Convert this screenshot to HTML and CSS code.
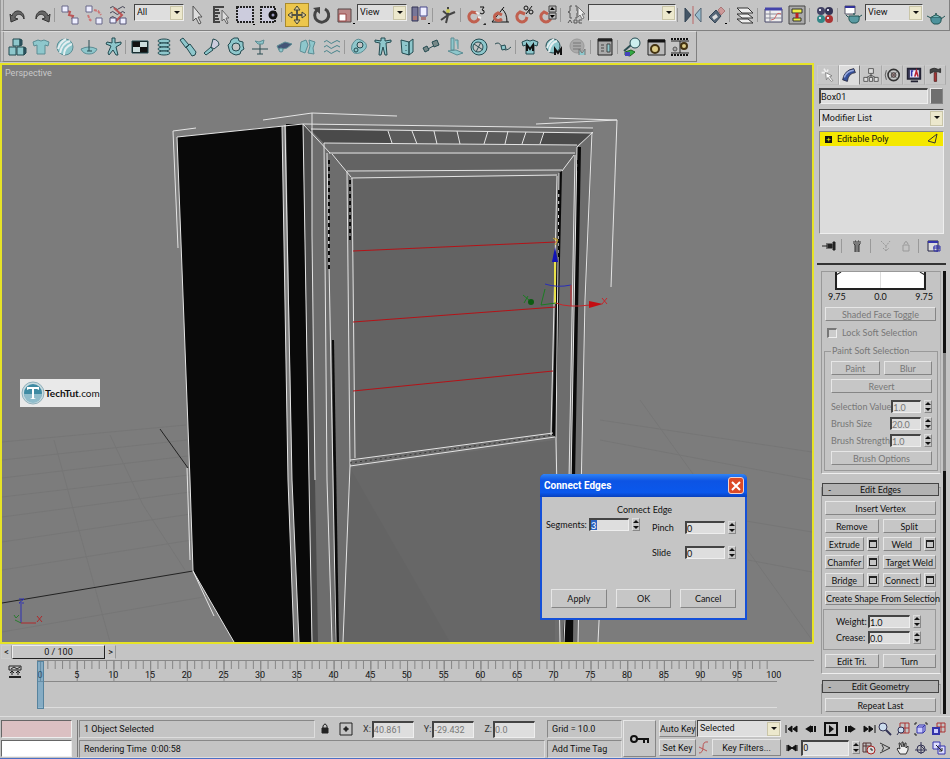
FILE: index.html
```html
<!DOCTYPE html>
<html lang="en">
  <head>
    <meta charset="UTF-8" />
    <title>Perspective - Connect Edges</title>
    <link rel="stylesheet" href="styles.css" />
  </head>
  <body>
    <header>
      <div class="toolbar main-bar">
        <button class="tool" title="Undo"><svg viewBox="0 0 20 20"><path d="M2 9l1 8 7-3-3-1c0-4 7-6 9 1 1-9-10-11-12-3z" fill="#666" stroke="#333"/></svg></button>
        <button class="tool" title="Redo"><svg viewBox="0 0 20 20"><path d="M18 9l-1 8-7-3 3-1c0-4-7-6-9 1-1-9 10-11 12-3z" fill="#666" stroke="#333"/></svg></button>
        <span class="sep"></span>
        <button class="tool" title="Link"><svg viewBox="0 0 20 20"><path d="M7 6l3 1-1 3 4 1-1 3" stroke="#b55" stroke-width="2"/><path d="M2 1h6v6H2zM12 13h6v6h-6z" fill="#eef" stroke="#668"/></svg></button>
        <button class="tool" title="Unlink"><svg viewBox="0 0 20 20"><path d="M4 10l2 5 2 1M10 5l4 1 3 4" stroke="#c77" stroke-width="2" stroke-dasharray="3 1"/><path d="M2 1h6v6H2zM12 13h6v6h-6z" fill="#eef" stroke="#668"/></svg></button>
        <button class="tool" title="Bind to space warp"><svg viewBox="0 0 20 20"><path d="M2 3q3-3 5 0t5 0 5 0M2 8q3-3 5 0t5 0 5 0M2 13q3-3 5 0t5 0" stroke="#445"/><path d="M6 3l8 7-6 6" stroke="#b55" stroke-width="2"/><path d="M2 13h6v5H2zM12 13h6v6h-6z" fill="#eef" stroke="#557"/></svg></button>
        <span class="combo filter-combo"><select aria-label="Selection filter"><option>All</option></select></span>
        <button class="tool" title="Select"><svg viewBox="0 0 20 20"><path d="M6 1v15l3-3 3 6 2-1-3-6h4z" fill="#ddd" stroke="#555"/></svg></button>
        <button class="tool" title="Select by name"><svg viewBox="0 0 20 20"><path d="M2 2h11M2 5h6M2 8h7M2 11h5M2 14h6M2 17h7M3 2v15" stroke="#444" stroke-width="2"/><path d="M11 5v11l2-2 3 5 1-1-2-5h3z" fill="#ddd" stroke="#666"/></svg></button>
        <button class="tool" title="Rectangular region"><svg viewBox="0 0 20 20"><path d="M2 2h16v15H2z" fill="#ccd" stroke="#222" stroke-width="2" stroke-dasharray="2 1"/><path d="M18 19h2v1h-2z" fill="#000"/></svg></button>
        <button class="tool" title="Window crossing"><svg viewBox="0 0 20 20"><path d="M2 2h14v15H2z" fill="#ccd" stroke="#222" stroke-width="2" stroke-dasharray="2 1"/><circle cx="14" cy="10" r="3" fill="#99b" stroke="#111" stroke-width="3"/></svg></button>
        <span class="sep"></span>
        <button class="tool active" title="Move"><svg viewBox="0 0 20 20"><path d="M10 2v16M2 10h16" stroke="#554" stroke-width="2"/><path d="M7 5l3-4 3 4zM7 15l3 4 3-4zM5 7l-4 3 4 3zM15 7l4 3-4 3z" fill="#dc9" stroke="#443"/></svg></button>
        <button class="tool" title="Rotate"><svg viewBox="0 0 20 20"><path d="M14 4a7 7 0 1 1-8 1" stroke="#444" stroke-width="3"/><path d="M2 3l7-1v7z" fill="#444"/></svg></button>
        <button class="tool" title="Scale"><svg viewBox="0 0 20 20"><path d="M3 4h13v13H3z" fill="#b88" stroke="#544"/><path d="M4 9h7v7H4z" fill="#fff" stroke="#944"/><path d="M18 18h2v1h-2z" fill="#000"/></svg></button>
        <span class="combo view-combo"><select aria-label="Reference coordinate system"><option>View</option></select></span>
        <button class="tool" title="Pivot center"><svg viewBox="0 0 20 20"><path d="M2 2h6v14H2z" fill="#779" stroke="#335"/><path d="M10 2h7v9h-7z" fill="#eef" stroke="#448"/><path d="M3 11h4v4H3zM11 12h5v3h-5z" fill="#a77"/><path d="M18 18h2v1h-2z" fill="#000"/></svg></button>
        <span class="sep"></span>
        <button class="tool" title="Manipulate"><svg viewBox="0 0 20 20"><path d="M10 2v8l-7 5M10 10l7-3M5 6l5 4M8 18l2-8" stroke="#444" stroke-width="2"/><circle cx="10" cy="6" r="2" fill="#cc5"/></svg></button>
        <span class="sep"></span>
        <button class="tool" title="Snaps toggle"><svg viewBox="0 0 20 20"><path d="M11 8L6 7q-5 3-2 8 4 4 8 0l1-3" stroke="#c0604f" stroke-width="3"/><path d="M10 7l3 2M12 12l3 1" stroke="#eee" stroke-width="2"/><path d="M14 2h4l-2 3q3 0 2 3-2 2-4 0M18 19h2v1h-2z" stroke="#111"/></svg></button>
        <button class="tool" title="Angle snap"><svg viewBox="0 0 20 20"><path d="M2 17h17M2 17L14 2M12 4q5 4 5 13" stroke="#111"/><path d="M12 10L8 8q-5 2-3 6 3 3 7 0" stroke="#c0604f" stroke-width="3"/></svg></button>
        <button class="tool" title="Percent snap"><svg viewBox="0 0 20 20"><path d="M11 9L6 7q-5 3-2 8 4 4 8 0l1-3" stroke="#c0604f" stroke-width="3"/><path d="M18 1l-6 8" stroke="#111"/><circle cx="12" cy="3" r="2" stroke="#111"/><circle cx="17" cy="7" r="2" stroke="#111"/></svg></button>
        <button class="tool" title="Spinner snap"><svg viewBox="0 0 20 20"><path d="M10 9L6 7q-5 3-2 8 4 4 8 0l1-3" stroke="#c0604f" stroke-width="3"/><path d="M11 1h7v6h-7zM11 8h7v6h-7z" fill="#bbb" stroke="#444"/><path d="M12 5l2-3 3 3zM12 10h5l-3 3z" fill="#000"/></svg></button>
        <span class="sep"></span>
        <button class="tool" title="Named selection sets"><svg viewBox="0 0 20 20"><path d="M6 1H4v5L2 7l2 1v5h2M9 1h2v5l2 1-2 1v5H9M2 18l2-3 2 3M8 15v3h3v-3zM16 15h-3v3h3" stroke="#555"/><path d="M12 2v10l2-2 2 4 2-1-2-4h3z" fill="#eee" stroke="#777"/></svg></button>
        <span class="combo sets-combo"><select aria-label="Named selection set"><option></option></select></span>
        <span class="sep"></span>
        <button class="tool" title="Mirror"><svg viewBox="0 0 20 20"><path d="M2 3l6 7-6 7z" fill="#456" stroke="#345"/><path d="M18 3l-6 7 6 7z" fill="#9bc" stroke="#567"/><path d="M10 1v18" stroke="#b66"/></svg></button>
        <button class="tool" title="Align"><svg viewBox="0 0 20 20"><path d="M2 12l7-7 5 6-6 7z" fill="#567" stroke="#345"/><path d="M11 5l3-3 4 4-4 4z" fill="#c99" stroke="#a77"/><path d="M5 12l4-3 2 3-4 3z" fill="#ddd"/><path d="M18 18h2v1h-2z" fill="#000"/></svg></button>
        <span class="sep"></span>
        <button class="tool" title="Layer manager"><svg viewBox="0 0 20 20"><path d="M2 14h11l5 4H7zM2 9h11l5 4H7zM2 3h11l5 5H7z" fill="#eee" stroke="#333"/></svg></button>
        <span class="sep"></span>
        <button class="tool" title="Curve editor"><svg viewBox="0 0 20 20"><path d="M2 4h17v13H2z" fill="#eee" stroke="#446"/><path d="M2 4h17" stroke="#44a" stroke-width="3"/><path d="M7 5v12M2 9h17M2 13h17" stroke="#889"/><path d="M8 15q4 0 5-4t5-2" stroke="#c66"/></svg></button>
        <button class="tool" title="Schematic view"><svg viewBox="0 0 20 20"><path d="M2 1h16v18H2z" fill="#aaa" stroke="#444"/><path d="M5 4h10v4H5zM6 13h8v3H6z" fill="#ee4" stroke="#333"/><path d="M10 8v5" stroke="#b22" stroke-width="3"/></svg></button>
        <span class="sep"></span>
        <button class="tool" title="Material editor"><svg viewBox="0 0 20 20"><circle cx="6" cy="6" r="4" fill="#446"/><circle cx="14" cy="6" r="4" fill="#335"/><circle cx="6" cy="14" r="4" fill="#388"/><circle cx="14" cy="14" r="4" fill="#a33"/><path d="M4 5h2M12 5h2M4 13h2M12 13h2" stroke="#dde" stroke-width="2"/></svg></button>
        <span class="sep"></span>
        <button class="tool" title="Render scene"><svg viewBox="0 0 20 20"><path d="M2 1h10v8H2z" fill="#fff" stroke="#556"/><path d="M2 2h10" stroke="#339" stroke-width="2"/><path d="M5 12l-2-2M6 11h10q1 6-3 7H9q-4-2-3-7zM16 12l3-2" fill="#5a9aa2" stroke="#255"/><circle cx="11" cy="9" r="1" fill="#366"/></svg></button>
        <span class="combo render-combo"><select aria-label="Render type"><option>View</option></select></span>
        <button class="tool" title="Quick render"><svg viewBox="0 0 20 20"><path d="M5 13L1 11M5 12h10q1 6-3 7H8q-4-2-3-7zM15 14l4-3" fill="#4d929c" stroke="#255"/><path d="M6 12q4-4 8 0" fill="#7bb" stroke="#255"/><circle cx="10" cy="9" r="1" fill="#255"/></svg></button>
      </div>

      <div class="toolbar reactor-bar">
        <button class="tool" title="Rigid bodies"><svg viewBox="0 0 20 20"><path d="M6 2h7v7H6zM2 10h7v8H2zM10 10h7v8h-7z"/><path d="M13 2l2 1v5l-2 1zM17 10l2 1v5l-2 2z" fill="#356"/></svg></button>
        <button class="tool" title="Cloth"><svg viewBox="0 0 20 20"><path class="soft" d="M2 5l5-2q3 2 6 0l5 2-1 4-3-1v9H6V8L3 9z"/></svg></button>
        <button class="tool" title="Soft body"><svg viewBox="0 0 20 20"><circle class="soft" cx="10" cy="10" r="8"/><path d="M5 16Q7 6 15 4M3 12Q5 5 11 2M9 18q0-8 8-11" stroke="#e4eef0" stroke-width="2" fill="none"/></svg></button>
        <button class="tool" title="Rope"><svg viewBox="0 0 20 20"><path class="soft" d="M2 12q8-4 16 0-2 5-8 5t-8-5z"/><path class="line" d="M10 3v11M8 14h5"/></svg></button>
        <button class="tool" title="Deforming mesh"><svg viewBox="0 0 20 20"><path d="M9 1h3v5l6-1v2l-5 3 2 8h-2l-3-5-4 5-1-2 3-7-5-2 1-2 5 1z"/></svg></button>
        <span class="sep"></span>
        <button class="tool" title="Plane"><svg viewBox="0 0 20 20"><path d="M2 4h16v12H2z" fill="#111"/><path d="M10 5h7v5h-7zM3 10h7v5H3z" fill="#cdd" stroke="none"/></svg></button>
        <button class="tool" title="Spring"><svg viewBox="0 0 20 20"><ellipse cx="10" cy="4" rx="6" ry="2"/><ellipse cx="10" cy="8" rx="6" ry="2"/><ellipse cx="10" cy="12" rx="6" ry="2"/><ellipse cx="10" cy="16" rx="6" ry="2"/></svg></button>
        <button class="tool" title="Linear dashpot"><svg viewBox="0 0 20 20"><path d="M2 3l3-2 6 7-3 3zM8 10l4-3 6 8-1 3-3 1z"/></svg></button>
        <button class="tool" title="Angular dashpot"><svg viewBox="0 0 20 20"><path d="M2 16l7-6 2 3-7 5z"/><path d="M9 10l2-8q6 1 6 6l-5 4z" fill="#ccd"/></svg></button>
        <button class="tool" title="Motor"><svg viewBox="0 0 20 20"><path d="M8 1h4l1 3 4 1v4l1 3-3 2-1 3-4 1-3-1-3-2-1-3-1-4 2-2 1-3z"/><circle cx="10" cy="10" r="4" fill="#c4c4c4"/></svg></button>
        <button class="tool" title="Wind"><svg viewBox="0 0 20 20"><path class="line" d="M2 12h16M10 5v12M7 17h6"/><path class="soft" d="M5 4l4 1 5-2-1 4H8z"/></svg></button>
        <button class="tool" title="Toy car"><svg viewBox="0 0 20 20"><path class="soft" d="M3 9l8-4 7 2-5 4-8 2z" fill="#457"/><circle class="soft" cx="7" cy="13" r="2"/></svg></button>
        <button class="tool" title="Fracture"><svg viewBox="0 0 20 20"><path class="soft" d="M3 5l5-2 2 5-3 8-5-2zM11 3l6 2-2 6 1 6-6-1 2-7z"/></svg></button>
        <button class="tool" title="Water"><svg viewBox="0 0 20 20"><path class="wave" d="M2 5q3-3 5 0t5 0 6 0M2 10q3-3 5 0t5 0 6 0M2 15q3-3 5 0t5 0 6 0"/></svg></button>
        <span class="sep"></span>
        <button class="tool" title="Constraint solver"><svg viewBox="0 0 20 20"><path class="soft" d="M3 8q4-8 9-5 7 3 5 8-5 7-12 5-4-3-2-8z"/><circle cx="11" cy="8" r="3" fill="#c4c4c4"/><circle cx="7" cy="13" r="2"/></svg></button>
        <button class="tool" title="Rag doll"><svg viewBox="0 0 20 20"><path d="M8 1h4v3l6-1v2l-5 1 1 12h-2l-2-8-2 8H6l1-12-5-1V3l6 1z"/></svg></button>
        <button class="tool" title="Hinge"><svg viewBox="0 0 20 20"><path d="M4 3l8 2v13l-7-2zM12 5l4-3v13l-4 3z"/><path class="line" d="M9 8v1M9 13v1"/></svg></button>
        <button class="tool" title="Point to point"><svg viewBox="0 0 20 20"><path class="line" d="M7 12l7-4"/><path d="M2 11l4-2 2 4-4 2zM11 5l5-2 2 5-5 2z" fill="#788"/></svg></button>
        <button class="tool" title="Prismatic"><svg viewBox="0 0 20 20"><path class="soft" d="M6 1h3v12H6zM3 14l8-1 7 3-6 2zM10 3h3v9"/></svg></button>
        <button class="tool" title="Wheel"><svg viewBox="0 0 20 20"><circle cx="10" cy="10" r="8"/><circle cx="9" cy="10" r="5" fill="#c4c4c4"/><path class="line" d="M5 7l9 6M12 5L7 15"/></svg></button>
        <button class="tool" title="Point to path"><svg viewBox="0 0 20 20"><path class="line" d="M2 7q4-3 7 3t9 0"/><path d="M8 9l4-1 1 4-4 1z"/></svg></button>
        <span class="sep"></span>
        <button class="tool" title="Cloth modifier"><svg viewBox="0 0 20 20"><path d="M2 5l5-2q3 2 6 0l5 2-1 4-3-1v9H6V8L3 9z"/><path class="mark" d="M7 14V8l3 4 3-4v6"/></svg></button>
        <button class="tool" title="Soft body modifier"><svg viewBox="0 0 20 20"><circle cx="9" cy="9" r="7"/><path d="M5 15Q6 6 13 4M3 11q2-6 7-9" stroke="#e4eef0" stroke-width="2" fill="none"/><path class="mark" d="M11 18v-6l3 4 3-4v6"/></svg></button>
        <button class="tool" title="Rope modifier"><svg viewBox="0 0 20 20"><circle cx="9" cy="9" r="7" fill="#aaa" stroke="#999"/><path d="M5 6h8M5 9h8M5 12h8M11 18v-6l3 4 3-4v6" stroke="#777"/></svg></button>
        <span class="sep"></span>
        <button class="tool" title="Property editor"><svg viewBox="0 0 20 20"><path d="M3 2h14v16H3z" fill="#aaa" stroke="#222"/><path d="M3 3h14" stroke="#222" stroke-width="3"/><path d="M6 8h3M6 11h3M6 14h3M12 7h3v8h-3z" stroke="#444"/></svg></button>
        <span class="sep"></span>
        <button class="tool" title="Analyze world"><svg viewBox="0 0 20 20"><path d="M3 15l6-2 4 2-5 4-5-1z" fill="#3a4" stroke="#262"/><path d="M3 15h5v4H3z" fill="#44b" stroke="none"/><path class="line" d="M2 14l7-6" stroke-width="2"/><circle cx="13" cy="6" r="5" fill="#cee"/></svg></button>
        <button class="tool" title="Preview animation"><svg viewBox="0 0 20 20"><path d="M2 3h17v15H2z" fill="#bbb" stroke="#222"/><path d="M2 4h17" stroke="#111" stroke-width="3"/><circle cx="9" cy="12" r="4" fill="#dc8" stroke="#431" stroke-width="2"/></svg></button>
        <button class="tool" title="Create animation"><svg viewBox="0 0 20 20"><path d="M1 2h18M1 18h18" stroke="#111" stroke-width="2" stroke-dasharray="2 1"/><path d="M1 4h18M1 16h18M10 4v12" stroke="#222"/><circle cx="14" cy="9" r="3" fill="#dc8" stroke="#431" stroke-width="2"/><circle cx="5" cy="12" r="2" fill="#aaa" stroke="#555"/></svg></button>
      </div>
    </header>

    <main>
      <section class="stage">
        <div class="viewport">
          <svg class="scene" viewBox="2 65 810 577" preserveAspectRatio="xMinYMin slice">
            <!-- ground grid -->
            <g stroke="#767676">
              <path d="M2 442L186 425M2 460L187 440M2 478L188 456M2 497L189 475M2 517L190 492M2 542L191 514M2 570L192 540M2 632L215 595M54 440L72 505 110 642M110 435L143 505 185 570"/>
              <path d="M600 420L812 452M600 440L812 480M740 520L812 532M748 560L812 572M640 400L812 640"/>
            </g>
            <path d="M2 603L193 571M160 429L188 468" stroke="#222"/>

            <!-- cabinet faces -->
            <path d="M303 124L593 128 586 300 578 642H312L309 480z" fill="#6d6d6d"/>
            <path d="M177 137L282 126 288 480 294 642H234L193 571 190 480z" fill="#090909"/>
            <path d="M286 124L303 124 309 480 312 642H299L292 480z" fill="#090909"/>
            <path d="M303 124L311 130 315 480 318 642H312L309 480z" fill="#4c4c4c"/>
            <path d="M311 130L593 133 577 145 324 143z" fill="#5b5b5b"/>
            <path d="M311 130L388 131 392 143H324zM543 133L593 133 577 145 540 144z" fill="#4a4a4a"/>
            <path d="M330 154L575 154 562 170 347 171z" fill="#636363"/>
            <path d="M352 178L557 176 552 434 355 460z" fill="#636363"/>
            <path d="M350 468L555 440V642H343z" fill="#676767"/>
            <path d="M350 468L450 642H343z" fill="#646464"/>
            <path d="M577 147L581 147 575 480 573 642H563L571 480zM559 173L562 171 556 437 552 435z" fill="#0a0a0a"/>
            <path d="M332 340L334 340 339 642H335z" fill="#0a0a0a"/>

            <!-- edges -->
            <g stroke="#e4e4e4">
              <path d="M177 137L190 480 193 571 234 642M193 571L214 616M187 468L190 560M177 137L303 124M282 126L288 480 294 642M285 125L292 480 299 642"/>
              <path d="M303 124L593 128M311 129L593 133M324 143L577 145M329 153L575 153M347 171L562 170M351 178L557 175"/>
              <path d="M303 124L330 153M332 154L351 177M593 132L577 147M574 155L562 171"/>
              <path d="M388 131L392 143M412 131L417 144M434 131L437 144M457 131L460 144M488 131L484 144M508 131L505 144M526 132L522 144M544 132L540 144"/>
              <path d="M303 124L309 480 312 642M324 143L327 480 332 642M327 153L333 480 336 642M347 172L350 466 343 642M352 178L355 458"/>
              <path d="M312 113V235L315 480M557 176L551 435M559 173L556 440 560 642M575 155L569 480M592 132L585 300 578 642M577 147L571 480 564 642"/>
              <path d="M350 460L553 433M350 466L555 437M173 131L196 128M173 131L178 248M263 120L312 113 397 116M549 118L617 120 611 287M536 124L617 120M606 480L598 642"/>
            </g>
            <path d="M350 463L554 435" stroke="#333" stroke-dasharray="2 3"/>
            <path d="M329 160V270M350 180V240M559 190V260M578 160V220" stroke="#090909" stroke-width="2" stroke-dasharray="4 3"/>
            <path d="M353 251L556 242M353 322L556 307M353 391L553 371" stroke="#b51217"/>

            <!-- move gizmo -->
            <path d="M555 304V262" stroke="#e8e04a" stroke-width="2"/>
            <path d="M555 247L552 262H558z" fill="#1113b5"/>
            <path d="M555 238l3 2-3 5M553 238l4 3" stroke="#cfa92c"/>
            <path d="M545 284q12 4 26 1" stroke="#2a2db8"/>
            <path d="M571 285V306M556 303q12 5 34 2" stroke="#c7252a"/>
            <path d="M589 301L603 304 589 308z" fill="#c30d12"/>
            <path d="M602 298l5 6M607 298l-5 6" stroke="#c7252a"/>
            <path d="M556 303l-15 2 4-16M523 295l6 5M528 296l-4 7" stroke="#1c7c22"/>
            <circle cx="531" cy="302" r="3" fill="#0c5c11"/>

            <!-- world axis -->
            <path d="M21 623V604M19 599h5l-5 4h5" stroke="#2f31b4"/>
            <path d="M21 623h15M37 616l5 6M42 616l-5 6" stroke="#b0282a"/>
            <path d="M21 623l-6-3M14 615l2 3 3-3" stroke="#2b7d2f"/>
          </svg>
          <span class="view-name">Perspective</span>
          <div class="watermark">
            <svg viewBox="0 0 24 24"><circle cx="12" cy="12" r="11" fill="#c9dbe0" stroke="#8fb0ba"/><circle cx="12" cy="12" r="9" fill="#3f8ba3"/><path d="M3 13a9 9 0 0 0 18 0z" fill="#8fbccb"/><path d="M6 6h12v3l-2-1h-3v9l2 1H9l2-1V8H8L6 9z" fill="#fff"/></svg>
            <span><b>TechTut</b>.com</span>
          </div>

          <form class="dialog">
            <div class="dialog-title">
              <h2>Connect Edges</h2>
              <button type="button" class="close" aria-label="Close"><svg viewBox="0 0 14 14"><path d="M3 3l8 8M11 3l-8 8" stroke="#fff" stroke-width="2"/></svg></button>
            </div>
            <div class="dialog-body">
              <p>Connect Edge</p>
              <div class="dialog-fields">
                <div class="field"><label for="segments">Segments:</label><input id="segments" class="picked" value="3" /><span class="spin"></span></div>
                <div class="pair">
                  <div class="field"><label for="pinch">Pinch</label><input id="pinch" value="0" /><span class="spin"></span></div>
                  <div class="field"><label for="slide">Slide</label><input id="slide" value="0" /><span class="spin"></span></div>
                </div>
              </div>
              <div class="dialog-buttons">
                <button type="button">Apply</button>
                <button type="button">OK</button>
                <button type="button">Cancel</button>
              </div>
            </div>
          </form>
        </div>

        <div class="time-slider">
          <button class="arrow" aria-label="Previous frame">&lt;</button>
          <button class="thumb">0 / 100</button>
          <button class="arrow" aria-label="Next frame">&gt;</button>
        </div>
        <div class="timeline">
          <button class="curve-toggle" aria-label="Open mini curve editor"><svg viewBox="0 0 14 14"><path d="M1 1h12v4H1z" stroke="#222"/><path d="M1 12h12" stroke="#222" stroke-width="2"/><path d="M3 4l3-2 3 2 3-2M4 6v4M10 6v4M2 8l2-2 2 2M8 8l2-2 2 2" stroke="#222"/></svg></button>
          <div class="track">
            <div class="ruler">
              <svg class="ticks"><line x1="0" y1="4" x2="100%" y2="4" pathLength="1000" stroke-width="8" stroke-dasharray="1.4 8.6"/><line x1="0" y1="10" x2="100%" y2="10" pathLength="1000" stroke-width="20" stroke-dasharray="1.4 48.6"/></svg>
              <ol>
                <li>0</li><li>5</li><li>10</li><li>15</li><li>20</li><li>25</li><li>30</li>
                <li>35</li><li>40</li><li>45</li><li>50</li><li>55</li><li>60</li><li>65</li>
                <li>70</li><li>75</li><li>80</li><li>85</li><li>90</li><li>95</li><li>100</li>
              </ol>
              <span class="now"></span>
            </div>
            <div class="keys"></div>
          </div>
        </div>
      </section>

      <aside class="panel">
        <nav class="tabs">
          <button title="Create"><svg viewBox="0 0 20 20"><path d="M5 2l3 5M2 7h4M10 3l-1 3" stroke="#eee" stroke-width="2"/><path d="M7 7l8 4-3 1 4 5-2 1-4-5-2 3z" fill="#fff" stroke="#777"/></svg></button>
          <button title="Modify" class="active"><svg viewBox="0 0 20 20"><path d="M2 16q2-12 14-14l2 5q-9 1-10 11z" fill="#35509a" stroke="#223"/><path d="M4 13q3-8 12-9" stroke="#9ad" stroke-width="2"/></svg></button>
          <button title="Hierarchy"><svg viewBox="0 0 20 20"><path d="M10 7v4M10 10l-7 4M10 10l7 4M10 10v4" stroke="#444"/><path d="M7 2h6v6H7zM1 13h5v5H1zM8 13h4v5H8zM14 13h5v5h-5z" fill="#ddd" stroke="#444"/></svg></button>
          <button title="Motion"><svg viewBox="0 0 20 20"><circle cx="12" cy="10" r="7" stroke="#333" stroke-width="2"/><circle cx="12" cy="10" r="3" fill="#a88" stroke="#333"/><path d="M8 6l8 8M16 6l-8 8M3 4q-3 6 0 12" stroke="#444"/></svg></button>
          <button title="Display"><svg viewBox="0 0 20 20"><path d="M2 2h16v13H2zM6 18h9" fill="#446" stroke="#223" stroke-width="2"/><path d="M5 4h11v9H5z" fill="#eef"/><path d="M7 12V5h2" stroke="#33a" stroke-width="2"/><path d="M11 12l2-7 2 7" stroke="#b23" stroke-width="2"/></svg></button>
          <button title="Utilities"><svg viewBox="0 0 20 20"><path d="M4 3q5-3 10 0l3-1v5l-3-1H8l-4 2z" fill="#444" stroke="#222"/><path d="M9 7h3v11H9z" fill="#a33" stroke="#522"/></svg></button>
        </nav>
        <div class="name-row">
          <input aria-label="Object name" value="Box01" />
          <button class="swatch" aria-label="Object color"></button>
        </div>
        <span class="combo modifier-combo"><select aria-label="Modifier list"><option>Modifier List</option></select></span>
        <ul class="stack">
          <li><span class="plus">+</span><span>Editable Poly</span><svg viewBox="0 0 12 12"><path d="M1 8l9-7-2 9z" stroke="#333"/></svg></li>
        </ul>
        <div class="stack-tools">
          <button title="Pin stack"><svg viewBox="0 0 14 14"><path d="M0 7h5M5 4v6M6 5h4v4H6zM11 3v8h2V3z" fill="#222" stroke="#222"/></svg></button>
          <span class="sep"></span>
          <button title="Show end result"><svg viewBox="0 0 14 14"><path d="M4 2v3l1 1v7M10 2v3L9 6v7M5 2h1v11M9 2H8v11" stroke="#333"/></svg></button>
          <span class="sep"></span>
          <button title="Make unique"><svg viewBox="0 0 14 14"><path d="M2 2l5 5 4-5M7 7v5M4 9l3 3 3-3" stroke="#999" stroke-dasharray="2 1"/></svg></button>
          <button title="Remove modifier"><svg viewBox="0 0 14 14"><path d="M4 6h6v6H4zM5 5q2-5 4 0" stroke="#999"/></svg></button>
          <span class="sep"></span>
          <button title="Configure sets"><svg viewBox="0 0 14 14"><path d="M1 2h10v10H1z" fill="#ddd" stroke="#224"/><path d="M1 3h10" stroke="#33a" stroke-width="2"/><path d="M7 7h6v5H7zM10 6v7M6 9h7" stroke="#33a"/></svg></button>
        </div>

        <div class="rollouts">
          <div class="rollout-list">
            <section class="rollout soft-selection">
              <svg class="falloff" viewBox="0 0 90 19" preserveAspectRatio="none"><path d="M0 0h90v18H0z" fill="#fff"/><path d="M1 0v17h88V0" stroke="#222" stroke-width="2"/><path d="M45 0v16" stroke="#ddd"/><path d="M1 3l5-3M89 3l-5-3" stroke="#222"/></svg>
              <div class="falloff-values"><span>9.75</span><span>0.0</span><span>9.75</span></div>
              <button class="wide" disabled>Shaded Face Toggle</button>
              <label class="check"><input type="checkbox" disabled />Lock Soft Selection</label>
              <fieldset>
                <legend>Paint Soft Selection</legend>
                <div class="row"><button disabled>Paint</button><button disabled>Blur</button></div>
                <button class="wide revert" disabled>Revert</button>
                <div class="field"><label for="selval">Selection Value</label><input id="selval" value="1.0" disabled /><span class="spin"></span></div>
                <div class="field"><label for="brushsize">Brush Size</label><input id="brushsize" value="20.0" disabled /><span class="spin"></span></div>
                <div class="field"><label for="strength">Brush Strength</label><input id="strength" value="1.0" disabled /><span class="spin"></span></div>
                <button class="wide" disabled>Brush Options</button>
              </fieldset>
            </section>

            <section class="rollout">
              <button class="rollout-head"><span>-</span>Edit Edges</button>
              <button class="wide">Insert Vertex</button>
              <div class="row"><button>Remove</button><button>Split</button></div>
              <div class="row">
                <div class="split"><button>Extrude</button><button class="opt" aria-label="Extrude settings"></button></div>
                <div class="split"><button>Weld</button><button class="opt" aria-label="Weld settings"></button></div>
              </div>
              <div class="row">
                <div class="split"><button>Chamfer</button><button class="opt" aria-label="Chamfer settings"></button></div>
                <button>Target Weld</button>
              </div>
              <div class="row">
                <div class="split"><button>Bridge</button><button class="opt" aria-label="Bridge settings"></button></div>
                <div class="split"><button>Connect</button><button class="opt" aria-label="Connect settings"></button></div>
              </div>
              <button class="wide">Create Shape From Selection</button>
              <div class="weights">
                <div class="field"><label for="weight">Weight:</label><input id="weight" value="1.0" /><span class="spin"></span></div>
                <div class="field"><label for="crease">Crease:</label><input id="crease" value="0.0" /><span class="spin"></span></div>
              </div>
              <div class="row"><button>Edit Tri.</button><button>Turn</button></div>
            </section>

            <section class="rollout last">
              <button class="rollout-head"><span>-</span>Edit Geometry</button>
              <button class="wide">Repeat Last</button>
            </section>
          </div>
          <div class="scrollbar"></div>
        </div>
      </aside>
    </main>

    <footer>
      <div class="listener"><div class="macro"></div><div class="script"></div></div>
      <div class="status">
        <div class="status-line">
          <div class="readout">1 Object Selected</div>
          <div class="coords">
            <svg class="small" viewBox="0 0 14 14"><path d="M4 6h6v5H4z" fill="#222" stroke="#222"/><path d="M5 6V4q2-4 4 0v2" stroke="#222"/></svg>
            <svg class="small" viewBox="0 0 14 14"><path d="M1 1h12v12H1z" stroke="#222"/><path d="M7 4v6M4 7h6" stroke="#222"/><circle cx="7" cy="7" r="2" fill="#222"/></svg>
            <label>X:<input value="40.861" /></label>
            <label>Y:<input value="-29.432" /></label>
            <label>Z:<input value="0.0" /></label>
          </div>
        </div>
        <div class="readout">Rendering Time&nbsp; 0:00:58</div>
      </div>
      <div class="grid-info">
        <div class="readout">Grid = 10.0</div>
        <div class="readout">Add Time Tag</div>
      </div>
      <button class="set-keys" aria-label="Set keys"><svg viewBox="0 0 20 20"><circle cx="4" cy="10" r="3" stroke="#111" stroke-width="2"/><path d="M7 10h12M14 10v4M18 10v4" stroke="#111" stroke-width="2"/></svg></button>
      <div class="key-modes">
        <div class="key-row"><button>Auto Key</button><span class="combo key-combo"><select aria-label="Key set"><option>Selected</option></select></span></div>
        <div class="key-row"><button>Set Key</button><svg class="small" viewBox="0 0 14 14"><path d="M2 12q4 0 4-6t5-5M2 6l8 4" stroke="#b55"/></svg><button class="filters">Key Filters...</button></div>
      </div>
      <div class="playback">
        <div class="play-row">
          <button title="Go to start"><svg viewBox="0 0 14 14"><path d="M1 3v8M7 4L3 7l4 3zM12 4L8 7l4 3z" fill="#111" stroke="#111"/></svg></button>
          <button title="Previous frame"><svg viewBox="0 0 14 14"><path d="M6 5L3 7l3 2zM8 4v6M11 4v6" fill="#111" stroke="#111" stroke-width="2"/></svg></button>
          <button title="Play"><svg viewBox="0 0 14 14"><path d="M1 1h12v12H1z" stroke="#111" stroke-width="2"/><path d="M5 3l5 4-5 4z" fill="#111"/></svg></button>
          <button title="Next frame"><svg viewBox="0 0 14 14"><path d="M8 5l3 2-3 2zM6 4v6M3 4v6" fill="#111" stroke="#111" stroke-width="2"/></svg></button>
          <button title="Go to end"><svg viewBox="0 0 14 14"><path d="M13 3v8M7 4l4 3-4 3zM2 4l4 3-4 3z" fill="#111" stroke="#111"/></svg></button>
        </div>
        <div class="play-row">
          <button title="Key mode"><svg viewBox="0 0 14 14"><path d="M2 4v6M12 4v6M7 7L3 4v6zM7 7l4-3v6z" fill="#111" stroke="#111"/></svg></button>
          <input aria-label="Current frame" value="0" /><span class="spin"></span>
          <button title="Time configuration"><svg viewBox="0 0 14 14"><path d="M1 2h8v9H1zM1 5h8M4 2v9" stroke="#533"/><circle cx="9" cy="9" r="4" fill="#ddd" stroke="#a22"/><path d="M9 7v2h2" stroke="#222"/></svg></button>
        </div>
      </div>
      <div class="view-nav">
        <button title="Zoom"><svg viewBox="0 0 14 14"><circle cx="5" cy="5" r="4" fill="#cde" stroke="#335"/><path d="M8 8l5 5" stroke="#335" stroke-width="2"/></svg></button>
        <button title="Zoom all"><svg viewBox="0 0 14 14"><path d="M4 1h9v10H4zM4 6h9M9 1v10" stroke="#a33"/><circle cx="5" cy="8" r="3" fill="#cde" stroke="#335"/><path d="M3 10l-2 3" stroke="#335"/></svg></button>
        <button title="Zoom extents"><svg viewBox="0 0 14 14"><path d="M3 5h6v6H3zM3 5l2-2h6v6l-2 2M9 5l2-2" fill="#ccf" stroke="#33a"/><path d="M1 3V1h2M11 1h2v2M1 11v2h2" stroke="#222"/></svg></button>
        <button title="Zoom extents all"><svg viewBox="0 0 14 14"><path d="M5 1h8v9H5zM9 1v9M5 5h8" stroke="#a33"/><path d="M1 6h6v6H1z" fill="#ccf" stroke="#33a" stroke-width="2"/></svg></button>
        <button title="Field of view"><svg viewBox="0 0 14 14"><path d="M2 2l10 5-10 5M4 4q3 3 0 6" stroke="#333"/></svg></button>
        <button title="Pan"><svg viewBox="0 0 14 14"><path d="M4 13L1 8l1-1 2 1-1-6h1l2 4V1h1l1 5 1-4h1v5l2-2v4l-2 4z" fill="#eee" stroke="#333"/></svg></button>
        <button title="Arc rotate"><svg viewBox="0 0 14 14"><circle cx="7" cy="8" r="4" stroke="#335"/><path d="M7 1v12M1 9h12M7 5l3 3" stroke="#335"/></svg></button>
        <button title="Maximize viewport"><svg viewBox="0 0 14 14"><path d="M1 1h7v7H1zM6 5h7v8H6z" fill="#ddf" stroke="#33a"/><path d="M4 4l6 6M10 7v3H7" stroke="#222"/></svg></button>
      </div>
    </footer>
  </body>
</html>
```
FILE: styles.css
```css
* {
  box-sizing: border-box;
}

body {
  margin: 0;
  min-height: 100vh;
  display: flex;
  flex-direction: column;
  background-color: #c4c4c4;
  color: #111;
  font-family: Roboto, "Liberation Sans", sans-serif;
  font-size: 9px;
  line-height: 12px;
}

button,
input,
select {
  font: inherit;
  color: inherit;
  margin: 0;
  padding: 0;
  border-radius: 0;
  min-width: 0;
}

button {
  background-color: #c6c6c6;
  border: 1px solid;
  border-color: #e6e6e6 #858585 #858585 #e6e6e6;
  white-space: nowrap;
}

input {
  background-color: #dedede;
  border: 1px solid;
  border-color: #444 #eee #eee #444;
  border-width: 2px 1px 1px 2px;
}

button:disabled,
input:disabled {
  color: #777;
}

svg {
  display: block;
  fill: none;
}

/* toolbars */
.toolbar {
  display: flex;
  align-items: center;
  height: 31px;
  border-bottom: 1px solid #808080;
  border-right: 1px solid #808080;
  border-left: 4px double #999;
}

.main-bar {
  padding-left: 2px;
}

.reactor-bar {
  width: 697px;
  padding-left: 1px;
  border-top: 1px solid #ddd;
}

.tool {
  width: 24px;
  height: 24px;
  flex: none;
  border: none;
  background: none;
  display: flex;
  align-items: center;
  justify-content: center;
}

.tool svg {
  width: 20px;
  height: 20px;
}

.tool.active {
  background-color: #ecc64c;
  border: 1px solid #a98a2c;
}

.reactor-bar svg {
  fill: #8ec7cc;
  stroke: #234a50;
}

.reactor-bar .soft {
  stroke: #5c8d94;
}

.reactor-bar .line {
  fill: none;
  stroke: #2b4d52;
}

.reactor-bar .wave {
  fill: none;
  stroke: #48848c;
}

.reactor-bar .mark {
  fill: none;
  stroke: #111;
  stroke-width: 2;
}

.sep {
  width: 4px;
  height: 14px;
  flex: none;
  border-left: 1px solid #999;
}

.reactor-bar .sep {
  width: 3px;
}

/* drop-downs */
.combo {
  position: relative;
  display: block;
  height: 17px;
  flex: none;
}

.combo select {
  appearance: none;
  width: 100%;
  height: 100%;
  display: block;
  padding: 0 14px 1px 2px;
  background-color: #dedede;
  border: 1px solid;
  border-color: #444 #eee #eee #444;
}

.combo::before {
  content: "";
  position: absolute;
  top: 2px;
  right: 1px;
  bottom: 1px;
  width: 11px;
  background-color: #ece8cd;
  border: 1px solid #c9c5a8;
  pointer-events: none;
}

.combo::after {
  content: "";
  position: absolute;
  right: 4px;
  top: 7px;
  border: 3px solid transparent;
  border-top-color: #111;
  border-bottom: none;
  pointer-events: none;
}

.toolbar .combo {
  margin: 0 1px 6px 0;
}

.toolbar .filter-combo {
  width: 50px;
  margin-left: 4px;
}

.view-combo {
  width: 50px;
}

.toolbar .sets-combo {
  width: 88px;
}

.render-combo {
  width: 58px;
}

/* viewport and timeline */
main {
  flex: 1;
  display: flex;
}

.stage {
  flex: 1;
  min-width: 0;
  display: flex;
  flex-direction: column;
}

.viewport {
  flex: 1;
  position: relative;
  margin-top: 1px;
  border: 2px solid #e6e326;
  background-color: #7c7c7c;
  overflow: hidden;
}

.scene {
  position: absolute;
  width: 100%;
  height: 100%;
}

.view-name {
  position: absolute;
  left: 3px;
  top: 2px;
  color: #c8c8c8;
}

.watermark {
  position: absolute;
  left: 18px;
  top: 314px;
  width: 80px;
  height: 28px;
  display: flex;
  align-items: center;
  padding-left: 1px;
  background-color: #e9e9e9;
  font-family: Lato, sans-serif;
  font-size: 10px;
}

.watermark svg {
  width: 24px;
  height: 24px;
}

.time-slider {
  display: flex;
  height: 16px;
  padding: 1px 0 1px 1px;
}

.time-slider .arrow {
  width: 11px;
  border-color: #ccc #999 #ccc #ccc;
}

.time-slider .thumb {
  width: 93px;
  border-color: #eee #222 #222 #eee;
}

.timeline {
  display: flex;
  height: 56px;
}

.curve-toggle {
  width: 37px;
  height: 24px;
  border: none;
  background: none;
}

.curve-toggle svg {
  width: 14px;
  height: 14px;
  margin-left: 8px;
}

.track {
  flex: 1;
  border-top: 1px solid #888;
}

.ruler {
  position: relative;
  height: 20px;
  margin: 0 40px 0 3px;
}

.ticks {
  width: 100%;
  height: 20px;
  stroke: #888;
}

.ruler ol {
  position: absolute;
  top: 8px;
  left: 0;
  right: 0;
  margin: 0;
  padding: 0;
  list-style: none;
  display: flex;
  justify-content: space-between;
}

.ruler li {
  width: 0;
  display: flex;
  justify-content: center;
}

.now {
  position: absolute;
  left: -3px;
  top: 0;
  width: 7px;
  height: 48px;
  background-color: rgba(72, 148, 196, 0.5);
  border: 1px solid #56839e;
}

.keys {
  height: 27px;
  margin-right: 37px;
  border-top: 1px solid #888;
  border-bottom: 1px solid #ddd;
}

/* Connect Edges */
.dialog {
  position: absolute;
  left: 538px;
  top: 409px;
  width: 207px;
  height: 146px;
  display: flex;
  flex-direction: column;
  background-color: #c5c5c5;
  border: 2px solid #1550d8;
  border-top: none;
  border-radius: 5px 5px 0 0;
}

.dialog-title {
  display: flex;
  align-items: center;
  justify-content: space-between;
  height: 23px;
  margin: 0 -2px;
  padding: 0 3px 0 4px;
  border-radius: 5px 5px 0 0;
  background: linear-gradient(#2f83f5, #0d54e4 30%, #0a58ec 80%, #0840bd);
}

.dialog-title h2 {
  margin: 0;
  color: #fff;
  font-size: 10px;
}

.close {
  width: 16px;
  height: 17px;
  background-color: #dc4a27;
  border: 1px solid #f3d3cb;
  border-radius: 3px;
}

/* tight captions need the narrower face */
.dialog-body,
.rollouts {
  font-family: Lato, "Liberation Sans", sans-serif;
}

.dialog-body {
  flex: 1;
  display: flex;
  flex-direction: column;
  padding: 7px 9px 10px 4px;
}

.dialog-body p {
  margin: 0 0 0 71px;
}

.dialog-fields {
  display: flex;
  justify-content: space-between;
  align-items: flex-start;
  padding-top: 2px;
}

.field {
  display: flex;
  align-items: center;
}

.field input {
  height: 13px;
}

.dialog .field input {
  width: 40px;
}

.dialog .field label {
  width: 43px;
}

.pair {
  display: flex;
  flex-direction: column;
  gap: 12px;
  padding-top: 3px;
}

.dialog .pair label {
  width: 33px;
}

.picked {
  background: linear-gradient(#2b64c0, #2b64c0) 0 0 / 6px 100% no-repeat #dedede;
  color: #fff;
}

.spin {
  position: relative;
  width: 8px;
  height: 13px;
  flex: none;
  margin-left: 3px;
  border: 1px solid;
  border-color: #ddd #888 #888 #ddd;
}

.spin::before,
.spin::after {
  content: "";
  position: absolute;
  left: 0;
  border: 3px solid transparent;
}

.spin::before {
  top: 1px;
  border-top: none;
  border-bottom-color: #111;
}

.spin::after {
  bottom: 1px;
  border-bottom: none;
  border-top-color: #111;
}

.dialog-buttons {
  display: flex;
  gap: 9px;
  margin-top: auto;
  padding-left: 5px;
}

.dialog-buttons button {
  flex: 1;
  height: 19px;
}

/* command panel */
.panel {
  width: 136px;
  display: flex;
  flex-direction: column;
  padding: 3px 4px 0 3px;
}

.tabs {
  display: flex;
  height: 20px;
}

.tabs button {
  flex: 1;
  display: flex;
  align-items: center;
  justify-content: center;
  border-color: #ccc #aaa #bbb #ccc;
}

.tabs .active {
  background-color: #dcdcdc;
  border-color: #eee #777 #dcdcdc #eee;
}

.tabs svg {
  width: 16px;
  height: 16px;
}

.name-row {
  display: flex;
  gap: 2px;
  margin: 3px 3px 0 2px;
}

.name-row input {
  flex: 1;
  height: 16px;
}

.swatch {
  width: 13px;
  background-color: #6f6f6f;
}

.modifier-combo {
  height: 18px;
  margin: 5px 2px 0;
}

.stack {
  height: 103px;
  margin: 4px 2px 0;
  padding: 0;
  list-style: none;
  background-color: #dcdcdc;
  border: 1px solid;
  border-color: #888 #eee #eee #888;
}

.stack li {
  display: flex;
  align-items: center;
  gap: 5px;
  height: 14px;
  padding: 0 4px 0 5px;
  background-color: #f4e800;
}

.stack svg {
  width: 12px;
  height: 12px;
  margin-left: auto;
}

.plus {
  width: 7px;
  height: 7px;
  background-color: #111;
  color: #ff0;
  font-size: 8px;
  line-height: 7px;
  text-align: center;
}

.stack-tools {
  display: flex;
  align-items: center;
  justify-content: space-around;
  height: 31px;
  padding: 0 2px 6px;
  border-bottom: 2px solid #333;
}

.stack-tools button {
  border: none;
  background: none;
}

.stack-tools svg,
.small {
  width: 14px;
  height: 14px;
}

.rollouts {
  flex: 1;
  display: flex;
  margin: 6px 0 2px;
}

.rollout-list {
  flex: 1;
  min-width: 0;
  padding: 0 2px 0 4px;
}

.rollout {
  display: flex;
  flex-direction: column;
  gap: 4px;
  border: 1px solid;
  border-color: #999 #aaa #eee #999;
  margin-bottom: 10px;
  padding: 0 4px 5px 3px;
}

.soft-selection {
  padding-bottom: 2px;
  margin-bottom: 13px;
}

.falloff {
  height: 19px;
  margin: 0 10px -4px;
}

.falloff-values {
  display: flex;
  justify-content: space-between;
  padding: 0 3px;
}

.wide,
.row button {
  height: 14px;
}

.rollout button {
  line-height: 11px;
}

.check {
  display: flex;
  align-items: center;
  gap: 5px;
  height: 16px;
  color: #777;
  padding-left: 2px;
}

.check input {
  appearance: none;
  width: 10px;
  height: 10px;
  border-color: #777 #eee #eee #777;
  background-color: #ccc;
}

fieldset {
  display: flex;
  flex-direction: column;
  gap: 4px;
  min-width: 0;
  margin: 0 -2px 0 -1px;
  padding: 4px 5px 5px 6px;
  border: 1px solid #999;
  color: #777;
}

legend {
  padding: 0 1px;
}

.revert {
  margin-bottom: 3px;
}

fieldset .field label {
  flex: 1;
  white-space: nowrap;
}

fieldset .field input {
  width: 31px;
}

.row {
  display: grid;
  grid-template-columns: repeat(2, minmax(0, 1fr));
  gap: 4px;
}

.split {
  display: flex;
  gap: 3px;
}

.split button {
  flex: 1;
}

.split .opt {
  flex: none;
  width: 12px;
  position: relative;
}

.opt::before {
  content: "";
  position: absolute;
  inset: 2px 1px;
  border: 1px solid #222;
  border-top-width: 2px;
}

.rollout-head {
  position: relative;
  height: 13px;
  margin: -5px -3px 1px;
  background-color: #b2b2b2;
  border: 1px solid #444;
}

.rollout-head span {
  position: absolute;
  left: 5px;
}

.weights {
  display: flex;
  flex-direction: column;
  gap: 3px;
  margin: 0 0 0 -2px;
  padding: 5px 14px 5px 12px;
  border: 1px solid #999;
}

.weights label {
  flex: 1;
}

.weights input {
  width: 42px;
}

.last {
  margin-bottom: 0;
  padding-bottom: 2px;
  border-bottom: none;
}

.scrollbar {
  width: 3px;
  background: linear-gradient(#111 82px, #888 82px, #888 200px, #111 200px);
}

/* status bar */
footer {
  display: flex;
  height: 43px;
  padding: 3px 2px 1px 1px;
  border-top: 1px solid #ddd;
  border-bottom: 1px solid #4c6fc4;
}

.listener {
  width: 71px;
  display: grid;
  gap: 2px;
}

.macro,
.script {
  border: 1px solid;
  border-color: #666 #eee #eee #666;
  background-color: #dbc0c2;
}

.script {
  background-color: #fff;
}

.status {
  flex: 1;
  min-width: 0;
  display: flex;
  flex-direction: column;
  gap: 2px;
  margin-left: 5px;
  padding-left: 1px;
  border-left: 1px solid #777;
}

.status-line {
  display: flex;
}

.readout {
  flex: 1;
  padding: 2px 4px;
  height: 18px;
  white-space: nowrap;
  border: 1px solid;
  border-color: #888 #ddd #ddd #888;
}

.coords {
  display: flex;
  align-items: center;
  gap: 7px;
  padding: 0 10px 0 3px;
}

.coords label {
  display: flex;
  align-items: center;
  gap: 1px;
  margin-left: 3px;
  color: #333;
}

.coords input {
  width: 42px;
  height: 17px;
  color: #777;
}

.grid-info {
  width: 75px;
  display: flex;
  flex-direction: column;
  gap: 2px;
  margin-left: 2px;
}

.set-keys {
  width: 33px;
  margin: 0 3px 0 1px;
  display: flex;
  align-items: center;
  justify-content: center;
}

.set-keys svg {
  width: 20px;
  height: 20px;
}

.key-modes {
  display: flex;
  flex-direction: column;
  gap: 2px;
  width: 122px;
}

.key-row {
  display: flex;
  align-items: center;
  gap: 1px;
  height: 17px;
}

.key-row button {
  width: 37px;
  height: 17px;
}

.key-combo,
.key-row .filters {
  flex: 1;
}

.playback {
  width: 91px;
  margin-left: 4px;
  display: flex;
  flex-direction: column;
  gap: 2px;
}

.play-row {
  display: flex;
  align-items: center;
  justify-content: space-between;
  height: 17px;
}

.play-row input {
  width: 48px;
  height: 16px;
}

.play-row button,
.view-nav button {
  border: none;
  background: none;
}

.play-row svg,
.view-nav svg {
  width: 14px;
  height: 14px;
}

.play-row .spin {
  margin: 0;
}

.view-nav {
  width: 72px;
  display: grid;
  grid-template-columns: repeat(4, 1fr);
  justify-items: center;
}
```
